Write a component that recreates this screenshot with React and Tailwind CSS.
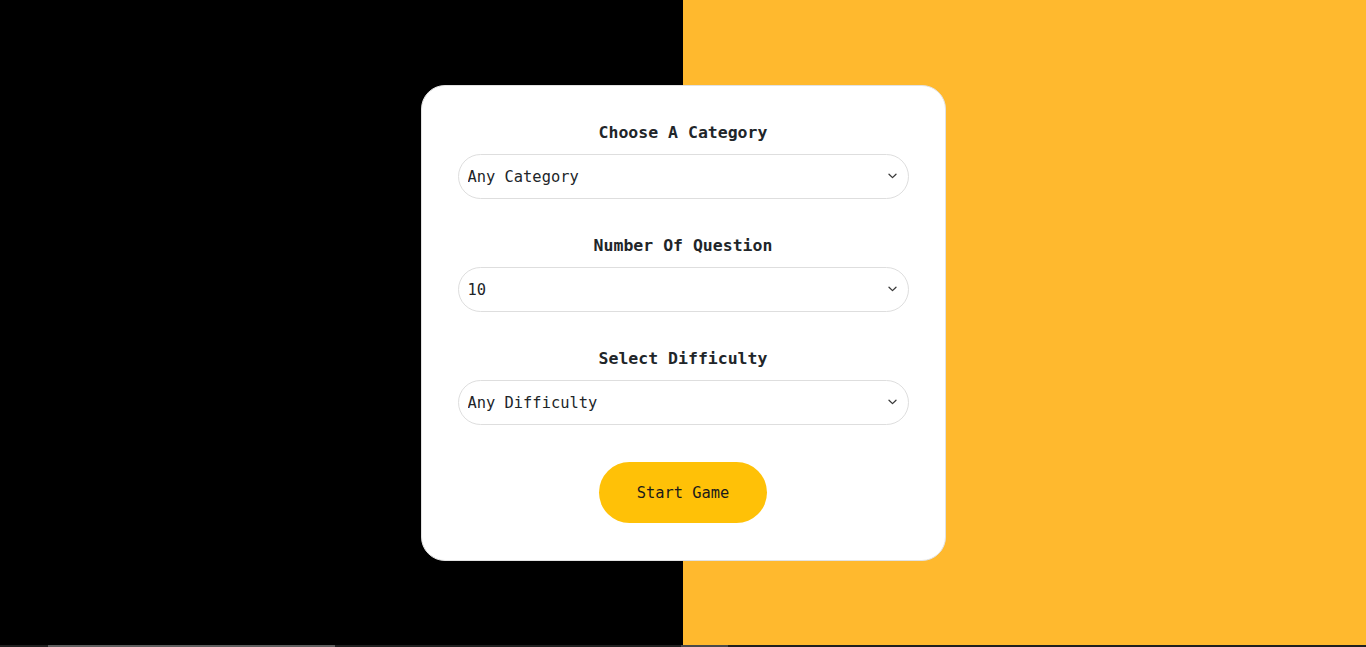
import React from 'react'

const mono = { fontFamily: '"DejaVu Sans Mono", "Liberation Mono", monospace' }

function Chevron() {
  return (
    <svg
      className="pointer-events-none absolute right-[12px] top-1/2 -translate-y-1/2"
      width="9"
      height="6"
      viewBox="0 0 9 6"
      fill="none"
    >
      <path d="M1 1.2 4.5 4.6 8 1.2" stroke="#3a3a3a" strokeWidth="1.3" strokeLinecap="round" strokeLinejoin="round" />
    </svg>
  )
}

function Field({ label, options }) {
  return (
    <div className="flex flex-col">
      <label className="text-center text-[16.5px] font-bold leading-6 text-[#212529] mb-[9px]">
        {label}
      </label>
      <div className="relative">
        <select
          className="w-full h-[45px] appearance-none rounded-full border border-[#dedede] bg-white pl-[9px] pr-8 pt-[4px] text-[15.4px] text-[#212529] outline-none"
          style={mono}
          defaultValue={options[0]}
        >
          {options.map((o) => (
            <option key={o}>{o}</option>
          ))}
        </select>
        <Chevron />
      </div>
    </div>
  )
}

export default function App() {
  return (
    <div className="w-full" style={mono}>
      <div className="relative h-[645px] w-full flex">
        <div className="w-1/2 bg-black" />
        <div className="w-1/2 bg-[#ffb92e]" />
        <div className="absolute inset-0 flex items-center justify-center">
          <div className="w-[525px] rounded-[24px] border border-[#e2e2e2] bg-white px-[36px] pt-[35px] pb-[37px] flex flex-col">
            <div className="flex flex-col gap-[35px]">
              <Field
                label="Choose A Category"
                options={['Any Category', 'General Knowledge', 'Books', 'Film', 'Music']}
              />
              <Field label="Number Of Question" options={['10', '15', '20', '25']} />
              <Field label="Select Difficulty" options={['Any Difficulty', 'Easy', 'Medium', 'Hard']} />
            </div>
            <div className="flex justify-center mt-[37px]">
              <button className="h-[61px] w-[168px] rounded-full bg-[#ffc107] pt-[3px] text-[15.4px] text-[#1a1a1a]">
                Start Game
              </button>
            </div>
          </div>
        </div>
      </div>
      <div className="h-[2px] w-full bg-[#202020] flex">
        <div className="w-[48px]" />
        <div className="w-[287px] bg-[#5e5e5e]" />
        <div className="w-[346px]" />
        <div className="w-[47px] bg-[#4a4a4a]" />
      </div>
    </div>
  )
}
